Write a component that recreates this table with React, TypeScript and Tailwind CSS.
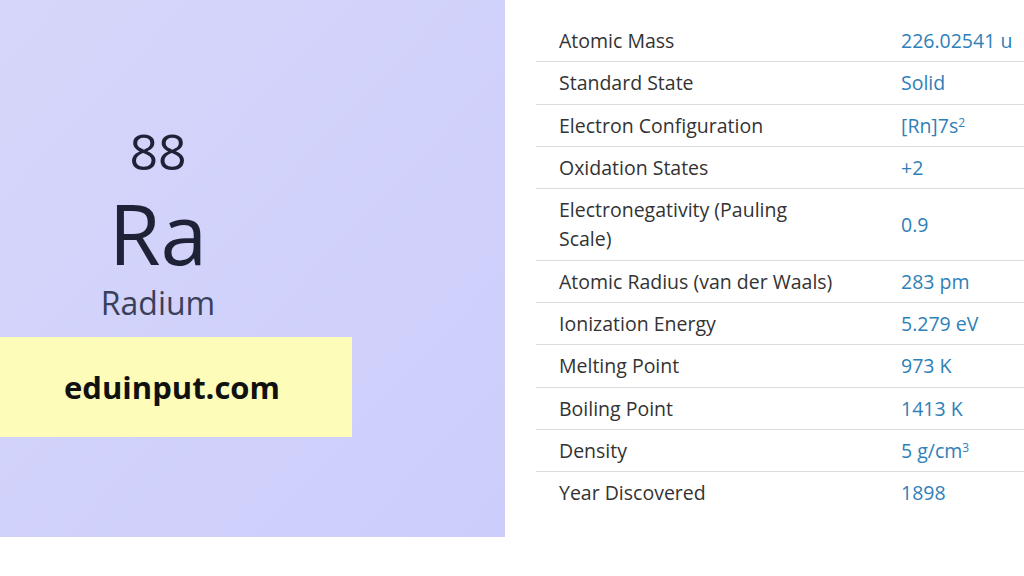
const rows: { label: string; value: React.ReactNode }[] = [
  { label: "Atomic Mass", value: "226.02541 u" },
  { label: "Standard State", value: "Solid" },
  {
    label: "Electron Configuration",
    value: (
      <>
        [Rn]7s<sup className="text-[12px] leading-none">2</sup>
      </>
    ),
  },
  { label: "Oxidation States", value: "+2" },
  { label: "Electronegativity (Pauling Scale)", value: "0.9" },
  { label: "Atomic Radius (van der Waals)", value: "283 pm" },
  { label: "Ionization Energy", value: "5.279 eV" },
  { label: "Melting Point", value: "973 K" },
  { label: "Boiling Point", value: "1413 K" },
  {
    label: "Density",
    value: (
      <>
        5 g/cm<sup className="text-[12px] leading-none">3</sup>
      </>
    ),
  },
  { label: "Year Discovered", value: "1898" },
];

export default function App() {
  return (
    <div className="flex h-[576px] w-[1024px] bg-white font-['Open_Sans',sans-serif]">
      <div className="flex h-[537px] w-[505px] flex-col bg-gradient-to-br from-[#d6d6fa] via-[#d1d2fb] to-[#cdcdfb]">
        <div className="flex w-[316px] flex-col items-center pt-[126px] text-[#1d2236]">
          <div className="text-[50px] leading-[50px]">88</div>
          <div className="mt-[15px] text-[84px] leading-[84px]">Ra</div>
          <div className="mt-[10px] text-[32px] leading-[36px] text-[#3a3f5c]">
            Radium
          </div>
        </div>
        <div className="mt-[16px] flex h-[100px] w-[352px] items-center bg-[#fdfdb9] pl-[64px]">
          <span className="text-[31px] font-bold text-[#111]">eduinput.com</span>
        </div>
      </div>

      <div className="flex-1 pl-[31px] pt-[20px]">
        {rows.map((r, i) => (
          <div
            key={r.label}
            className={`flex items-center py-[6px] text-[19.5px] leading-[29.3px] ${
              i < rows.length - 1 ? "border-b border-[#dcdcdc]" : ""
            }`}
          >
            <div className="w-[342px] pl-[23px] text-[#333]">
              <div className="w-[285px]">{r.label}</div>
            </div>
            <div className="pl-[23px] text-[#2f7fb8]">{r.value}</div>
          </div>
        ))}
      </div>
    </div>
  );
}
